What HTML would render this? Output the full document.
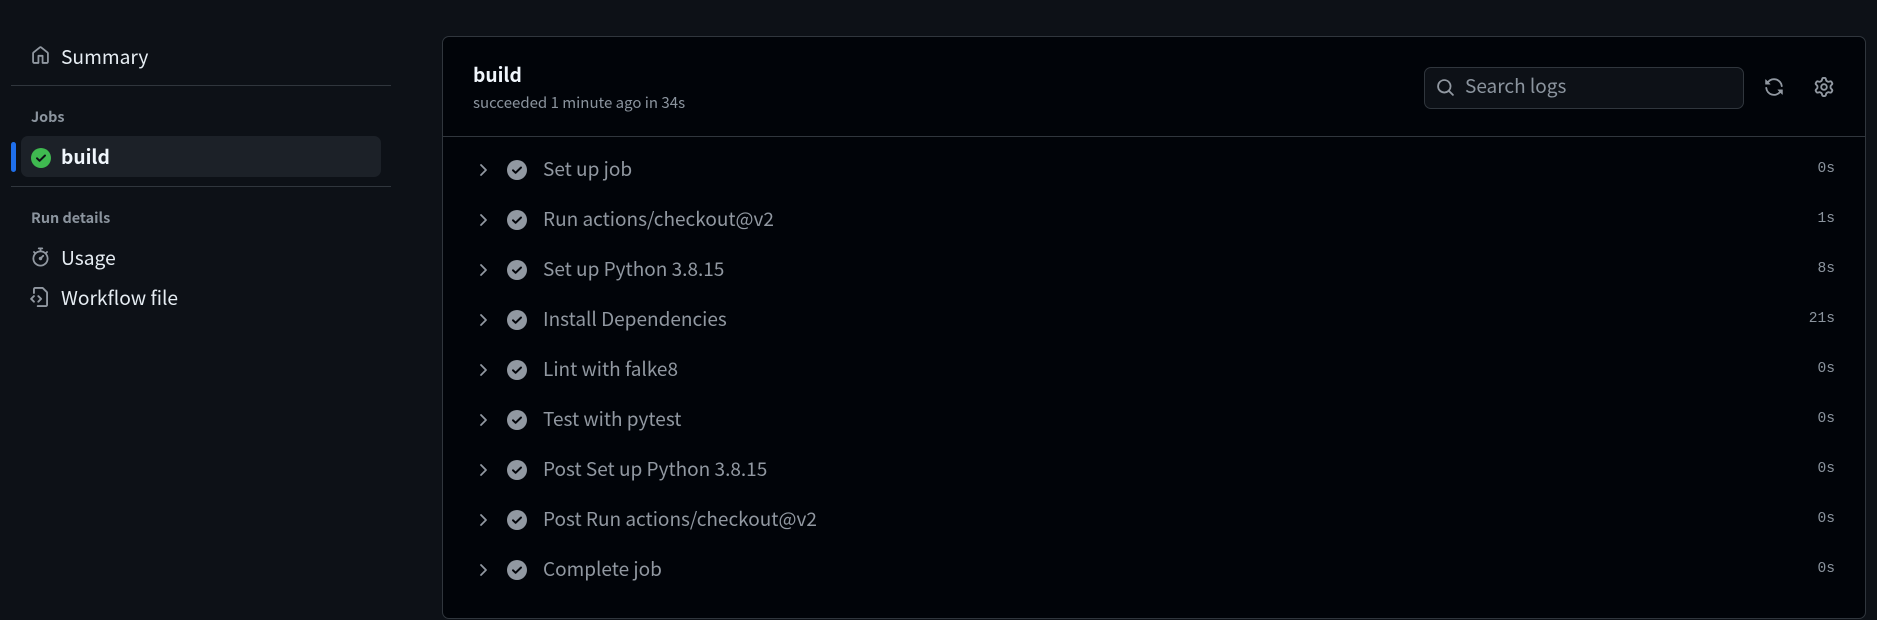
<!DOCTYPE html>
<html><head><meta charset="utf-8"><style>
*{margin:0;padding:0;box-sizing:border-box}
body{width:1877px;height:620px;background:#0d1117;font-family:"Noto Sans CJK JP","Liberation Sans",sans-serif;color:#e6edf3;position:relative;overflow:hidden}
.a{position:absolute;white-space:nowrap}
.side{font-size:19.2px;line-height:24px;color:#e6edf3}
.lbl{font-size:14.4px;font-weight:bold;color:#8b949e;line-height:18px}
.hr{position:absolute;height:1px;background:#30363d}
.panel{position:absolute;left:442px;top:36px;width:1424px;height:583px;background:#010409;border:1px solid #30363d;border-radius:7px}
.step{position:absolute;left:0;width:100%;height:40px}
.step .t{position:absolute;left:100px;top:7px;font-size:19px;line-height:24px;color:#9198a1}
.step .d{position:absolute;right:30px;top:11px;font-family:"Liberation Mono",monospace;font-size:14.6px;color:#8b949e}
.step svg{position:absolute}
</style></head><body>

<svg class="a" style="left:31px;top:46px" width="19" height="19" viewBox="0 0 16 16" fill="#9198a1"><path d="M6.906.664a1.749 1.749 0 0 1 2.187 0l5.25 4.2c.415.332.657.835.657 1.367v7.019A1.75 1.75 0 0 1 13.250 15h-3.5a.75.75 0 0 1-.75-.75V9H7v5.250a.75.75 0 0 1-.75.75h-3.5A1.75 1.75 0 0 1 1 13.250V6.23c0-.531.242-1.034.657-1.366l5.25-4.2Zm1.25 1.171a.25.25 0 0 0-.312 0l-5.25 4.2a.25.25 0 0 0-.094.196v7.019c0 .138.112.25.25.25H5.5V8.25a.75.75 0 0 1 .75-.75h3.5a.75.75 0 0 1 .75.75v5.25h2.75a.25.25 0 0 0 .25-.25V6.23a.25.25 0 0 0-.094-.195Z"/></svg>
<div class="a side" style="left:61px;top:44px">Summary</div>
<div class="hr" style="left:11px;top:85px;width:380px"></div>
<div class="a lbl" style="left:31px;top:108px">Jobs</div>
<div class="a" style="left:11px;top:142px;width:5px;height:30px;background:#1f6feb;border-radius:3px"></div>
<div class="a" style="left:21px;top:136px;width:360px;height:41px;background:#1c2128;border-radius:7px"></div>
<svg class="a" style="left:31px;top:148px" width="20" height="20" viewBox="0 0 20 20"><circle cx="10" cy="10" r="10" fill="#3fb950"/><path d="M6 10.3l2.6 2.5L14 7.5" stroke="#0d1117" stroke-width="2" fill="none" stroke-linecap="round" stroke-linejoin="round"/></svg>
<div class="a side" style="left:61px;top:144px;font-weight:bold;color:#f0f6fc">build</div>
<div class="hr" style="left:11px;top:186px;width:380px"></div>
<div class="a lbl" style="left:31px;top:209px">Run details</div>
<svg class="a" style="left:31px;top:247px" width="19" height="20" viewBox="0 0 16 16" fill="#9198a1"><path d="M5.75.75A.75.75 0 0 1 6.5 0h3a.75.75 0 0 1 0 1.5h-.75v1l-.001.041a6.724 6.724 0 0 1 3.464 1.435l.007-.006.75-.75a.749.749 0 0 1 1.06 1.06l-.75.75-.006.007a6.75 6.75 0 1 1-10.548 0L2.72 5.03l-.75-.75a.751.751 0 0 1 1.06-1.06l.75.75.007.006A6.72 6.72 0 0 1 7.25 2.541V1.5H6.5a.75.75 0 0 1-.75-.75ZM8 14.5A5.25 5.25 0 1 0 8 4a5.25 5.25 0 0 0 0 10.5Zm.389-6.7 1.33-1.33a.75.75 0 1 1 1.061 1.06L9.45 8.861A1.503 1.503 0 0 1 8 10.75a1.499 1.499 0 1 1 .389-2.950Z"/></svg>
<div class="a side" style="left:61px;top:245px">Usage</div>
<svg class="a" style="left:30px;top:287px" width="21" height="20" viewBox="0 0 16 16" fill="#9198a1"><path d="M3.75 1.5a.25.25 0 0 0-.25.25v3a.75.75 0 0 1-1.5 0v-3C2 .784 2.784 0 3.75 0h5.586c.464 0 .909.184 1.237.513l2.914 2.914c.329.328.513.773.513 1.237v9.586A1.75 1.75 0 0 1 12.25 16h-6.5a.75.75 0 0 1 0-1.5h6.5a.25.25 0 0 0 .25-.25V4.664a.25.25 0 0 0-.073-.177L9.513 1.573a.25.25 0 0 0-.177-.073ZM3.28 7.78l-1.72 1.72 1.72 1.72a.749.749 0 0 1-1.06 1.06l-2.25-2.25a.749.749 0 0 1 0-1.06l2.25-2.25a.749.749 0 1 1 1.06 1.06Zm2.44 0a.749.749 0 0 1 1.06-1.06l2.25 2.25a.749.749 0 0 1 0 1.06l-2.25 2.25a.749.749 0 1 1-1.06-1.06l1.72-1.72Z"/></svg>
<div class="a side" style="left:61px;top:285px">Workflow file</div>

<div class="panel">
  <div class="a" style="left:30px;top:24px;font-size:19.2px;font-weight:bold;color:#f0f6fc;line-height:26px">build</div>
  <div class="a" style="left:30px;top:56px;font-size:15px;color:#8b949e;line-height:20px">succeeded 1 minute ago in 34s</div>
  <div class="a" style="left:981px;top:30px;width:320px;height:42px;border:1px solid #30363d;border-radius:7px;background:#0d1117"></div>
  <svg class="a" style="left:993px;top:41px" width="19" height="19" viewBox="0 0 16 16" fill="#9198a1"><path d="M10.68 11.74a6 6 0 0 1-7.922-8.982 6 6 0 0 1 8.982 7.922l3.04 3.04a.749.749 0 0 1-.326 1.275.749.749 0 0 1-.734-.215ZM11.5 7a4.499 4.499 0 1 0-8.997 0A4.499 4.499 0 0 0 11.5 7Z"/></svg>
  <div class="a" style="left:1022px;top:36px;font-size:19px;color:#8b949e;line-height:26px">Search logs</div>
  <svg class="a" style="left:1321px;top:40px" width="20" height="20" viewBox="0 0 16 16" fill="#9198a1"><path d="M1.705 8.005a.75.75 0 0 1 .834.656 5.5 5.5 0 0 0 9.592 2.97l-1.204-1.204a.25.25 0 0 1 .177-.427h3.646a.25.25 0 0 1 .25.25v3.646a.25.25 0 0 1-.427.177l-1.38-1.38A7.002 7.002 0 0 1 1.05 8.84a.75.75 0 0 1 .656-.834ZM8 2.5a5.487 5.487 0 0 0-4.131 1.869l1.204 1.204A.25.25 0 0 1 4.896 6H1.25A.25.25 0 0 1 1 5.75V2.104a.25.25 0 0 1 .427-.177l1.38 1.38A7.002 7.002 0 0 1 14.95 7.16a.75.75 0 0 1-1.49.178A5.5 5.5 0 0 0 8 2.5Z"/></svg>
  <svg class="a" style="left:1371px;top:40px" width="20" height="20" viewBox="0 0 16 16" fill="#9198a1"><path d="M8 0a8.2 8.2 0 0 1 .701.031C9.444.095 9.99.645 10.16 1.29l.288 1.107c.018.066.079.158.212.224.231.114.454.243.668.386.123.082.233.09.299.071l1.103-.303c.644-.176 1.392.021 1.82.63.27.385.506.792.704 1.218.315.675.111 1.422-.364 1.891l-.814.806c-.049.048-.098.147-.088.294.016.257.016.515 0 .772-.01.147.038.246.088.294l.814.806c.475.469.679 1.216.364 1.891a7.977 7.977 0 0 1-.704 1.217c-.428.61-1.176.807-1.82.63l-1.102-.302c-.067-.019-.177-.011-.3.071a5.909 5.909 0 0 1-.668.386c-.133.066-.194.158-.211.224l-.29 1.106c-.168.646-.715 1.196-1.458 1.26a8.006 8.006 0 0 1-1.402 0c-.743-.064-1.289-.614-1.458-1.26l-.289-1.106c-.018-.066-.079-.158-.212-.224a5.738 5.738 0 0 1-.668-.386c-.123-.082-.233-.09-.299-.071l-1.103.303c-.644.176-1.392-.021-1.82-.63a8.12 8.12 0 0 1-.704-1.218c-.315-.675-.111-1.422.363-1.891l.815-.806c.05-.048.098-.147.088-.294a6.214 6.214 0 0 1 0-.772c.01-.147-.038-.246-.088-.294l-.815-.806C.635 6.045.431 5.298.746 4.623a7.92 7.92 0 0 1 .704-1.217c.428-.61 1.176-.807 1.82-.63l1.102.302c.067.019.177.011.3-.071.214-.143.437-.272.668-.386.133-.066.194-.158.211-.224l.29-1.106C6.009.645 6.556.095 7.299.03 7.53.01 7.764 0 8 0Zm-.571 1.525c-.036.003-.108.036-.137.146l-.289 1.105c-.147.561-.549.967-.998 1.189-.173.086-.34.183-.5.29-.417.278-.97.423-1.529.27l-1.103-.303c-.109-.03-.175.016-.195.045-.22.312-.412.644-.573.99-.014.031-.021.11.059.19l.815.806c.411.406.562.957.53 1.456a4.709 4.709 0 0 0 0 .582c.032.499-.119 1.05-.53 1.456l-.815.806c-.081.08-.073.159-.059.19.162.346.353.677.573.989.02.03.085.076.195.046l1.102-.303c.56-.153 1.113-.008 1.53.27.161.107.328.204.501.29.447.222.85.629.997 1.189l.289 1.105c.029.109.101.143.137.146a6.6 6.6 0 0 0 1.142 0c.036-.003.108-.036.137-.146l.289-1.105c.147-.561.549-.967.998-1.189.173-.086.34-.183.5-.29.417-.278.97-.423 1.529-.27l1.103.303c.109.029.175-.016.195-.045.22-.313.411-.644.573-.99.014-.031.021-.11-.059-.19l-.815-.806c-.411-.406-.562-.957-.53-1.456a4.709 4.709 0 0 0 0-.582c-.032-.499.119-1.05.53-1.456l.815-.806c.081-.08.073-.159.059-.19a6.464 6.464 0 0 0-.573-.989c-.02-.03-.085-.076-.195-.046l-1.102.303c-.56.153-1.113.008-1.530-.27a4.44 4.44 0 0 0-.501-.29c-.447-.222-.85-.629-.997-1.189l-.289-1.105c-.029-.11-.101-.143-.137-.146a6.6 6.6 0 0 0-1.142 0ZM11 8a3 3 0 1 1-6 0 3 3 0 0 1 6 0ZM9.5 8a1.5 1.5 0 1 0-3.001.001A1.5 1.5 0 0 0 9.5 8Z"/></svg>
  <div class="hr" style="left:0;top:99px;width:100%"></div>
</div>

<div style="position:absolute;left:443px;top:37px;width:1422px;height:580px">
  <div class="step" style="top:113px"><svg style="left:34px;top:12px" width="14" height="16" viewBox="0 0 14 16"><path d="M4 3l5 5-5 5" stroke="#9198a1" stroke-width="1.8" fill="none" stroke-linecap="round" stroke-linejoin="round"/></svg><svg style="left:64px;top:10px" width="20" height="20" viewBox="0 0 20 20"><circle cx="10" cy="10" r="10" fill="#9198a1"/><path d="M6 10.3l2.6 2.5L14 7.5" stroke="#010409" stroke-width="2" fill="none" stroke-linecap="round" stroke-linejoin="round"/></svg><div class="t">Set up job</div><div class="d">0s</div></div>
  <div class="step" style="top:163px"><svg style="left:34px;top:12px" width="14" height="16" viewBox="0 0 14 16"><path d="M4 3l5 5-5 5" stroke="#9198a1" stroke-width="1.8" fill="none" stroke-linecap="round" stroke-linejoin="round"/></svg><svg style="left:64px;top:10px" width="20" height="20" viewBox="0 0 20 20"><circle cx="10" cy="10" r="10" fill="#9198a1"/><path d="M6 10.3l2.6 2.5L14 7.5" stroke="#010409" stroke-width="2" fill="none" stroke-linecap="round" stroke-linejoin="round"/></svg><div class="t">Run actions/checkout@v2</div><div class="d">1s</div></div>
  <div class="step" style="top:213px"><svg style="left:34px;top:12px" width="14" height="16" viewBox="0 0 14 16"><path d="M4 3l5 5-5 5" stroke="#9198a1" stroke-width="1.8" fill="none" stroke-linecap="round" stroke-linejoin="round"/></svg><svg style="left:64px;top:10px" width="20" height="20" viewBox="0 0 20 20"><circle cx="10" cy="10" r="10" fill="#9198a1"/><path d="M6 10.3l2.6 2.5L14 7.5" stroke="#010409" stroke-width="2" fill="none" stroke-linecap="round" stroke-linejoin="round"/></svg><div class="t">Set up Python 3.8.15</div><div class="d">8s</div></div>
  <div class="step" style="top:263px"><svg style="left:34px;top:12px" width="14" height="16" viewBox="0 0 14 16"><path d="M4 3l5 5-5 5" stroke="#9198a1" stroke-width="1.8" fill="none" stroke-linecap="round" stroke-linejoin="round"/></svg><svg style="left:64px;top:10px" width="20" height="20" viewBox="0 0 20 20"><circle cx="10" cy="10" r="10" fill="#9198a1"/><path d="M6 10.3l2.6 2.5L14 7.5" stroke="#010409" stroke-width="2" fill="none" stroke-linecap="round" stroke-linejoin="round"/></svg><div class="t">Install Dependencies</div><div class="d">21s</div></div>
  <div class="step" style="top:313px"><svg style="left:34px;top:12px" width="14" height="16" viewBox="0 0 14 16"><path d="M4 3l5 5-5 5" stroke="#9198a1" stroke-width="1.8" fill="none" stroke-linecap="round" stroke-linejoin="round"/></svg><svg style="left:64px;top:10px" width="20" height="20" viewBox="0 0 20 20"><circle cx="10" cy="10" r="10" fill="#9198a1"/><path d="M6 10.3l2.6 2.5L14 7.5" stroke="#010409" stroke-width="2" fill="none" stroke-linecap="round" stroke-linejoin="round"/></svg><div class="t">Lint with falke8</div><div class="d">0s</div></div>
  <div class="step" style="top:363px"><svg style="left:34px;top:12px" width="14" height="16" viewBox="0 0 14 16"><path d="M4 3l5 5-5 5" stroke="#9198a1" stroke-width="1.8" fill="none" stroke-linecap="round" stroke-linejoin="round"/></svg><svg style="left:64px;top:10px" width="20" height="20" viewBox="0 0 20 20"><circle cx="10" cy="10" r="10" fill="#9198a1"/><path d="M6 10.3l2.6 2.5L14 7.5" stroke="#010409" stroke-width="2" fill="none" stroke-linecap="round" stroke-linejoin="round"/></svg><div class="t">Test with pytest</div><div class="d">0s</div></div>
  <div class="step" style="top:413px"><svg style="left:34px;top:12px" width="14" height="16" viewBox="0 0 14 16"><path d="M4 3l5 5-5 5" stroke="#9198a1" stroke-width="1.8" fill="none" stroke-linecap="round" stroke-linejoin="round"/></svg><svg style="left:64px;top:10px" width="20" height="20" viewBox="0 0 20 20"><circle cx="10" cy="10" r="10" fill="#9198a1"/><path d="M6 10.3l2.6 2.5L14 7.5" stroke="#010409" stroke-width="2" fill="none" stroke-linecap="round" stroke-linejoin="round"/></svg><div class="t">Post Set up Python 3.8.15</div><div class="d">0s</div></div>
  <div class="step" style="top:463px"><svg style="left:34px;top:12px" width="14" height="16" viewBox="0 0 14 16"><path d="M4 3l5 5-5 5" stroke="#9198a1" stroke-width="1.8" fill="none" stroke-linecap="round" stroke-linejoin="round"/></svg><svg style="left:64px;top:10px" width="20" height="20" viewBox="0 0 20 20"><circle cx="10" cy="10" r="10" fill="#9198a1"/><path d="M6 10.3l2.6 2.5L14 7.5" stroke="#010409" stroke-width="2" fill="none" stroke-linecap="round" stroke-linejoin="round"/></svg><div class="t">Post Run actions/checkout@v2</div><div class="d">0s</div></div>
  <div class="step" style="top:513px"><svg style="left:34px;top:12px" width="14" height="16" viewBox="0 0 14 16"><path d="M4 3l5 5-5 5" stroke="#9198a1" stroke-width="1.8" fill="none" stroke-linecap="round" stroke-linejoin="round"/></svg><svg style="left:64px;top:10px" width="20" height="20" viewBox="0 0 20 20"><circle cx="10" cy="10" r="10" fill="#9198a1"/><path d="M6 10.3l2.6 2.5L14 7.5" stroke="#010409" stroke-width="2" fill="none" stroke-linecap="round" stroke-linejoin="round"/></svg><div class="t">Complete job</div><div class="d">0s</div></div>
</div>
</body></html>
